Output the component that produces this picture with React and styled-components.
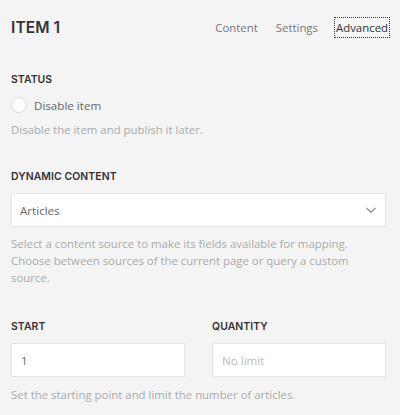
import styled, { createGlobalStyle } from 'styled-components'

const GlobalStyle = createGlobalStyle`
  html, body {
    margin: 0;
    padding: 0;
    background: #f4f4f4;
  }
  body {
    font-family: "Open Sans", "Liberation Sans", sans-serif;
  }
`

const Panel = styled.div`
  width: 375px;
  padding: 0 14px 0 11px;
  background: #f4f4f4;
  min-height: 415px;
`

const Header = styled.div`
  display: flex;
  align-items: center;
  justify-content: space-between;
  height: 54px;
`

const Title = styled.h2`
  margin: 0;
  font-family: "Inter", "Liberation Sans", sans-serif;
  font-size: 15.5px;
  font-weight: 600;
  color: #333;
  letter-spacing: 0.1px;
`

const Tabs = styled.nav`
  display: flex;
  align-items: center;
  gap: 16px;
  margin-right: -3px;
`

const Tab = styled.span`
  font-size: 11.4px;
  color: ${(p) => (p.active ? '#333' : '#777')};
  padding: 2px 1px;
  outline: ${(p) => (p.active ? '1px dotted #333' : 'none')};
`

const Section = styled.div`
  margin-top: ${(p) => p.top || 0}px;
`

const Label = styled.div`
  font-family: "Inter", "Liberation Sans", sans-serif;
  font-size: 10.4px;
  font-weight: 600;
  color: #333;
  text-transform: uppercase;
  letter-spacing: 0.1px;
  margin-bottom: 10px;
`

const CheckRow = styled.label`
  display: flex;
  align-items: center;
  gap: 7px;
  padding-top: 1px;
  font-size: 11.6px;
  color: #666;
`

const Radio = styled.span`
  width: 14px;
  height: 14px;
  border-radius: 50%;
  border: 1px solid #ddd;
  background: #fff;
`

const Help = styled.p`
  margin: ${(p) => p.gap || 8}px 0 0;
  font-size: 11.4px;
  line-height: 17px;
  color: #aaa;
`

const Select = styled.div`
  height: 32px;
  display: flex;
  align-items: center;
  justify-content: space-between;
  padding: 0 8px 0 8px;
  background: #fff;
  border: 1px solid #e6e6e6;
  font-size: 11.6px;
  color: #666;
`

const Grid = styled.div`
  display: grid;
  grid-template-columns: 1fr 1fr;
  gap: 27px;
`

const Input = styled.div`
  height: 32px;
  display: flex;
  align-items: center;
  padding: 0 9px;
  background: #fff;
  border: 1px solid #e6e6e6;
  font-size: 11.6px;
  color: ${(p) => (p.placeholder ? '#bbb' : '#666')};
`

export default function App() {
  return (
    <>
      <GlobalStyle />
      <Panel>
        <Header>
          <Title>ITEM 1</Title>
          <Tabs>
            <Tab>Content</Tab>
            <Tab>Settings</Tab>
            <Tab active>Advanced</Tab>
          </Tabs>
        </Header>

        <Section top={19}>
          <Label>Status</Label>
          <CheckRow>
            <Radio />
            Disable item
          </CheckRow>
          <Help>Disable the item and publish it later.</Help>
        </Section>

        <Section top={32}>
          <Label>Dynamic Content</Label>
          <Select>
            Articles
            <svg width="12" height="12" viewBox="0 0 12 12" fill="none">
              <polyline points="1.5,4 6,8.5 10.5,4" stroke="#888" strokeWidth="1.2" />
            </svg>
          </Select>
          <Help>
            Select a content source to make its fields available for mapping. Choose between sources of the current page or query a custom source.
          </Help>
        </Section>

        <Section top={34}>
          <Grid>
            <div>
              <Label>Start</Label>
              <Input>1</Input>
            </div>
            <div>
              <Label>Quantity</Label>
              <Input placeholder>No limit</Input>
            </div>
          </Grid>
          <Help gap={9}>Set the starting point and limit the number of articles.</Help>
        </Section>
      </Panel>
    </>
  )
}
